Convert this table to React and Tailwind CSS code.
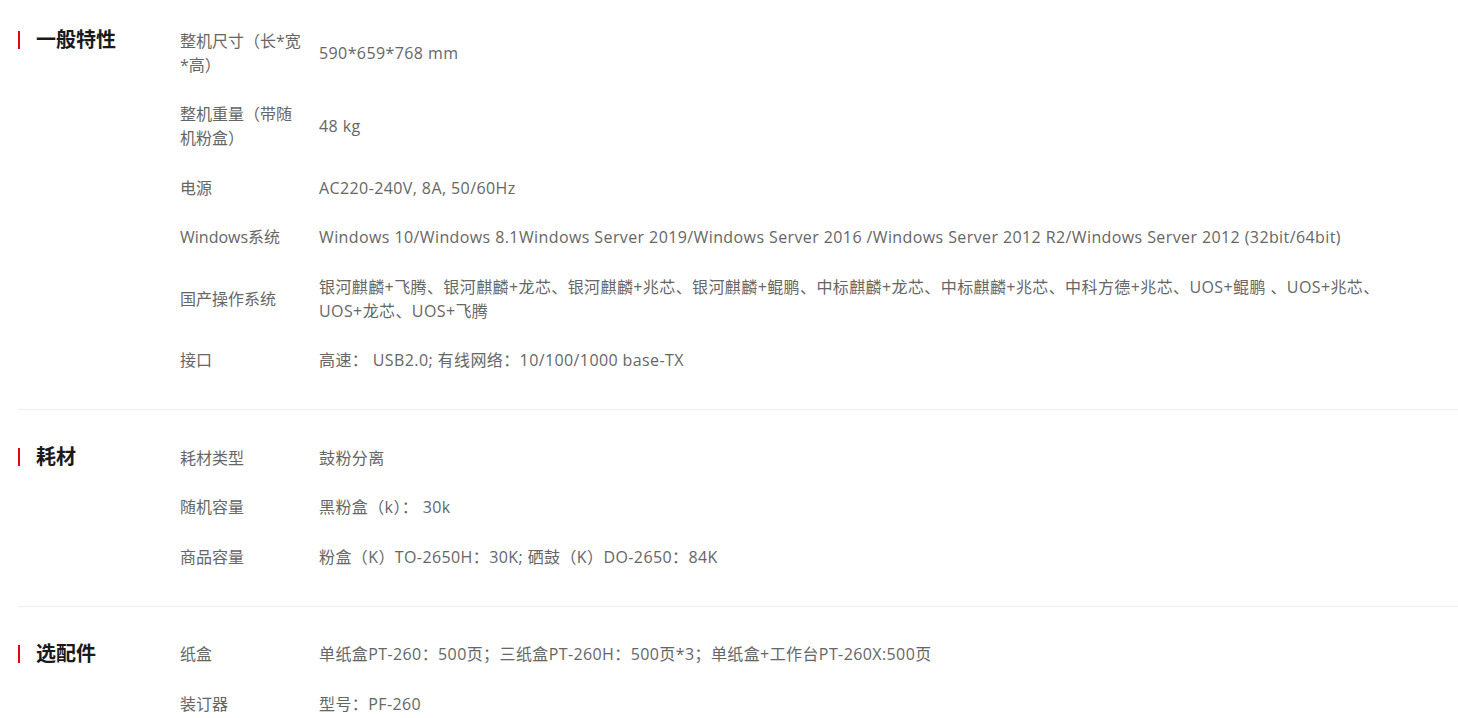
import React from 'react'

const sections = [
  {
    title: '一般特性',
    first: true,
    rows: [
      ['整机尺寸（长*宽*高）', '590*659*768 mm'],
      ['整机重量（带随机粉盒）', '48 kg'],
      ['电源', 'AC220-240V, 8A, 50/60Hz'],
      ['Windows系统', 'Windows 10/Windows 8.1Windows Server 2019/Windows Server 2016 /Windows Server 2012 R2/Windows Server 2012 (32bit/64bit)'],
      ['国产操作系统', '银河麒麟+飞腾、银河麒麟+龙芯、银河麒麟+兆芯、银河麒麟+鲲鹏、中标麒麟+龙芯、中标麒麟+兆芯、中科方德+兆芯、UOS+鲲鹏 、UOS+兆芯、UOS+龙芯、UOS+飞腾'],
      ['接口', '高速： USB2.0; 有线网络：10/100/1000 base-TX'],
    ],
  },
  {
    title: '耗材',
    rows: [
      ['耗材类型', '鼓粉分离'],
      ['随机容量', '黑粉盒（k）： 30k'],
      ['商品容量', '粉盒（K）TO-2650H：30K; 硒鼓（K）DO-2650：84K'],
    ],
  },
  {
    title: '选配件',
    rows: [
      ['纸盒', '单纸盒PT-260：500页；三纸盒PT-260H：500页*3；单纸盒+工作台PT-260X:500页'],
      ['装订器', '型号：PF-260'],
    ],
  },
]

export default function App() {
  return (
    <div className="bg-white h-[718px] overflow-hidden pl-[18px] font-['Open_Sans','Noto_Sans_CJK_SC',sans-serif]">
      {sections.map((sec, i) => (
        <div
          key={sec.title}
          className={`flex ${sec.first ? 'pt-4' : 'pt-[23px]'} pb-6 ${i < sections.length - 1 ? 'border-b border-[#eeeeee]' : ''}`}
        >
          <div className="w-[162px] shrink-0 pt-[12px]">
            <div className="flex items-center h-6">
              <span className="w-[2px] h-[18px] bg-[#e60012]" />
              <h3 className="pl-4 text-[20px] leading-6 font-bold text-[#1a1a1a]">{sec.title}</h3>
            </div>
          </div>
          <div className="flex-1">
            {sec.rows.map(([label, value]) => (
              <div key={label} className="flex items-center py-[12.75px] text-[16px] leading-6 text-[#666]">
                <div className="w-[125px] mr-[14px] shrink-0">{label}</div>
                <div className="flex-1 pr-[60px] tracking-[0.4px]">{value}</div>
              </div>
            ))}
          </div>
        </div>
      ))}
    </div>
  )
}
